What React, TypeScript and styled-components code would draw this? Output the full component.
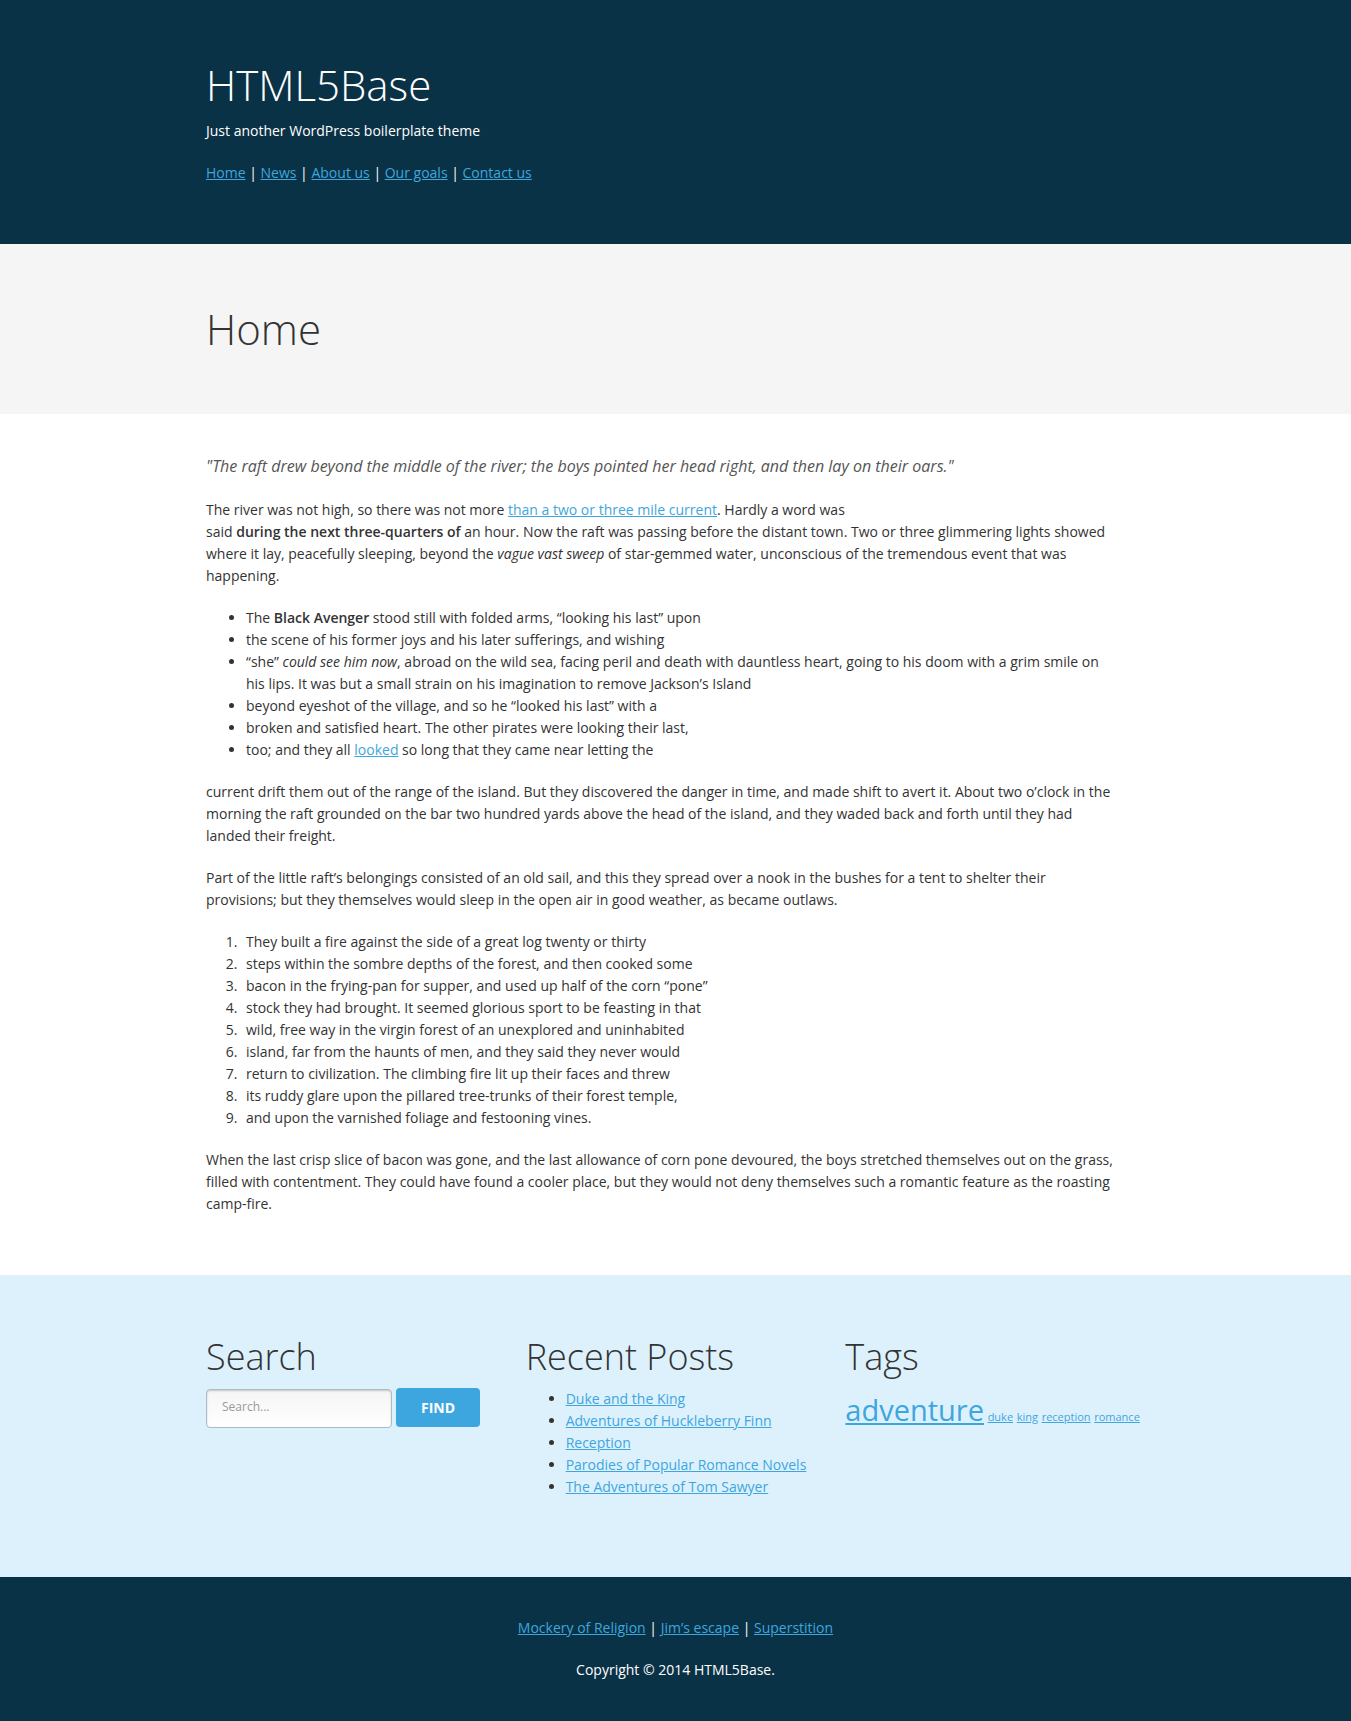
import React from "react";
import styled, { createGlobalStyle } from "styled-components";

const GlobalStyle = createGlobalStyle`
  * { box-sizing: border-box; }
  body {
    margin: 0;
    background: #ffffff;
    color: #333333;
    font-family: "Open Sans", "Liberation Sans", sans-serif;
    font-size: 14px;
    line-height: 22px;
  }
  strong { font-weight: 600; }
`;

const Row = styled.div`
  width: 100%;
  max-width: 979px;
  margin: 0 auto;
  padding: 0 20px;
`;

const Masthead = styled.header`
  padding: 60px 0;
  background: #0a3246;
  color: #ffffff;
`;

const PageTitle = styled.section`
  padding: 60px 0;
  background: #f5f5f5;
`;

const Main = styled.main`
  padding: 40px 0 60px;
`;

const Widgets = styled.aside`
  padding: 60px 0 79px;
  background: #ddf1fd;
`;

const Footer = styled.footer`
  padding: 40px 0;
  background: #0a3246;
  color: #ffffff;
  text-align: center;
`;

const Heading = styled.h1`
  margin: 0;
  font-size: 42px;
  line-height: 50px;
  font-weight: 300;
`;

const WidgetTitle = styled.h2`
  margin: 0 0 10px;
  font-size: 36px;
  line-height: 43px;
  font-weight: 300;
`;

const Tagline = styled.p`
  margin: 10px 0 20px;
`;

const Link = styled.a`
  color: #3ea6de;
  text-decoration: underline;
`;

const Article = styled.article`
  display: flex;
  flex-direction: column;
  gap: 20px;
  max-width: 910px;
`;

const Lead = styled.p`
  margin: 0;
  color: #555555;
  font-size: 16px;
  line-height: 25px;
  font-style: italic;
`;

const Paragraph = styled.p`
  margin: 0;
`;

const Copyright = styled.p`
  margin: 20px 0 0;
`;

const BulletList = styled.ul`
  margin: 0;
  padding-left: 40px;
  list-style: disc;
`;

const NumberList = styled.ol`
  margin: 0;
  padding-left: 35px;
`;

const Step = styled.li`
  padding-left: 5px;
`;

const Columns = styled.div`
  display: grid;
  grid-template-columns: repeat(3, minmax(0, 1fr));
  gap: 20px;

  @media (max-width: 767px) {
    grid-template-columns: 1fr;
  }
`;

const SearchForm = styled.form`
  display: flex;
  align-items: flex-start;
  gap: 4px;
`;

const SearchInput = styled.input`
  width: 186px;
  height: 39px;
  margin: 1px 0 0;
  padding: 0 15px 4px;
  border: 1px solid #a9bdc8;
  border-radius: 4px;
  background: linear-gradient(#f5f5f5, #ffffff);
  box-shadow: inset 0 1px 2px rgba(0, 0, 0, 0.2);
  color: #333333;
  font-family: inherit;
  font-size: 12px;
  line-height: 22px;

  &::placeholder {
    color: #999999;
    opacity: 1;
  }
`;

const SearchButton = styled.button`
  height: 39px;
  padding: 0 25px;
  border: 0;
  border-radius: 4px;
  background: #3ea6de;
  color: #ffffff;
  font-family: inherit;
  font-size: 14px;
  line-height: 22px;
  font-weight: 700;
  text-transform: uppercase;
`;

const TagCloud = styled.div`
  line-height: 44px;
`;

const Tag = styled(Link)<{ $large?: boolean }>`
  font-size: ${(p) => (p.$large ? 29 : 11)}px;
`;

const menu = ["Home", "News", "About us", "Our goals", "Contact us"];
const footerMenu = ["Mockery of Religion", "Jim’s escape", "Superstition"];
const posts = [
  "Duke and the King",
  "Adventures of Huckleberry Finn",
  "Reception",
  "Parodies of Popular Romance Novels",
  "The Adventures of Tom Sawyer",
];
const tags = ["adventure", "duke", "king", "reception", "romance"];
const steps = [
  "They built a fire against the side of a great log twenty or thirty",
  "steps within the sombre depths of the forest, and then cooked some",
  "bacon in the frying-pan for supper, and used up half of the corn “pone”",
  "stock they had brought. It seemed glorious sport to be feasting in that",
  "wild, free way in the virgin forest of an unexplored and uninhabited",
  "island, far from the haunts of men, and they said they never would",
  "return to civilization. The climbing fire lit up their faces and threw",
  "its ruddy glare upon the pillared tree-trunks of their forest temple,",
  "and upon the varnished foliage and festooning vines.",
];

function LinkBar({ items }: { items: string[] }) {
  return (
    <nav>
      {items.map((item, i) => (
        <React.Fragment key={item}>
          {i > 0 && " | "}
          <Link href="#">{item}</Link>
        </React.Fragment>
      ))}
    </nav>
  );
}

export default function App() {
  return (
    <>
      <GlobalStyle />
      <Masthead>
        <Row>
          <Heading>HTML5Base</Heading>
          <Tagline>Just another WordPress boilerplate theme</Tagline>
          <LinkBar items={menu} />
        </Row>
      </Masthead>

      <PageTitle>
        <Row>
          <Heading>Home</Heading>
        </Row>
      </PageTitle>

      <Main>
        <Row>
          <Article>
            <Lead>
              "The raft drew beyond the middle of the river; the boys pointed her head right, and
              then lay on their oars."
            </Lead>
            <Paragraph>
              The river was not high, so there was not more{" "}
              <Link href="#">than a two or three mile current</Link>. Hardly a word was
              <br />
              said <strong>during the next three-quarters of</strong> an hour. Now the raft was
              passing before the distant town. Two or three glimmering lights showed where it lay,
              peacefully sleeping, beyond the <em>vague vast sweep</em> of star-gemmed water,
              unconscious of the tremendous event that was happening.
            </Paragraph>
            <BulletList>
              <li>
                The <strong>Black Avenger</strong> stood still with folded arms, “looking his last”
                upon
              </li>
              <li>the scene of his former joys and his later sufferings, and wishing</li>
              <li>
                “she” <em>could see him now</em>, abroad on the wild sea, facing peril and death
                with dauntless heart, going to his doom with a grim smile on his lips. It was but a
                small strain on his imagination to remove Jackson’s Island
              </li>
              <li>beyond eyeshot of the village, and so he “looked his last” with a</li>
              <li>broken and satisfied heart. The other pirates were looking their last,</li>
              <li>
                too; and they all <Link href="#">looked</Link> so long that they came near letting
                the
              </li>
            </BulletList>
            <Paragraph>
              current drift them out of the range of the island. But they discovered the danger in
              time, and made shift to avert it. About two o’clock in the morning the raft grounded
              on the bar two hundred yards above the head of the island, and they waded back and
              forth until they had landed their freight.
            </Paragraph>
            <Paragraph>
              Part of the little raft’s belongings consisted of an old sail, and this they spread
              over a nook in the bushes for a tent to shelter their
              <br />
              provisions; but they themselves would sleep in the open air in good weather, as became
              outlaws.
            </Paragraph>
            <NumberList>
              {steps.map((step) => (
                <Step key={step}>{step}</Step>
              ))}
            </NumberList>
            <Paragraph>
              When the last crisp slice of bacon was gone, and the last allowance of corn pone
              devoured, the boys stretched themselves out on the grass, filled with contentment.
              They could have found a cooler place, but they would not deny themselves such a
              romantic feature as the roasting camp-fire.
            </Paragraph>
          </Article>
        </Row>
      </Main>

      <Widgets>
        <Row>
          <Columns>
            <section>
              <WidgetTitle>Search</WidgetTitle>
              <SearchForm role="search" onSubmit={(e) => e.preventDefault()}>
                <SearchInput type="text" aria-label="Search" placeholder="Search..." />
                <SearchButton type="submit">Find</SearchButton>
              </SearchForm>
            </section>
            <section>
              <WidgetTitle>Recent Posts</WidgetTitle>
              <BulletList>
                {posts.map((post) => (
                  <li key={post}>
                    <Link href="#">{post}</Link>
                  </li>
                ))}
              </BulletList>
            </section>
            <section>
              <WidgetTitle>Tags</WidgetTitle>
              <TagCloud>
                {tags.map((tag, i) => (
                  <React.Fragment key={tag}>
                    {i > 0 && " "}
                    <Tag href="#" $large={i === 0}>
                      {tag}
                    </Tag>
                  </React.Fragment>
                ))}
              </TagCloud>
            </section>
          </Columns>
        </Row>
      </Widgets>

      <Footer>
        <Row>
          <LinkBar items={footerMenu} />
          <Copyright>Copyright © 2014 HTML5Base.</Copyright>
        </Row>
      </Footer>
    </>
  );
}
